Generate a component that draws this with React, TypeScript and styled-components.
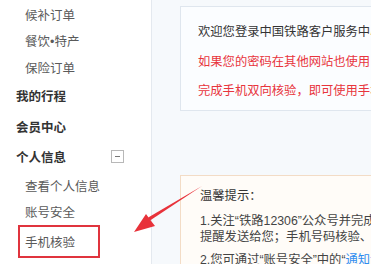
import React from 'react';
import styled, { createGlobalStyle } from 'styled-components';

const GlobalStyle = createGlobalStyle`
  html, body {
    margin: 0;
    padding: 0;
    overflow: hidden;
    background: #ffffff;
  }
  body {
    font-family: "Liberation Sans", "Noto Sans CJK SC", sans-serif;
  }
`;

type NavEntry = { label: string; kind: 'head' | 'sub'; toggle?: boolean; active?: boolean };

const navEntries: NavEntry[] = [
  { label: '候补订单', kind: 'sub' },
  { label: '餐饮•特产', kind: 'sub' },
  { label: '保险订单', kind: 'sub' },
  { label: '我的行程', kind: 'head' },
  { label: '会员中心', kind: 'head' },
  { label: '个人信息', kind: 'head', toggle: true },
  { label: '查看个人信息', kind: 'sub' },
  { label: '账号安全', kind: 'sub' },
  { label: '手机核验', kind: 'sub', active: true },
  { label: '常用信息管理', kind: 'head', toggle: true },
];

export default function App() {
  return (
    <>
      <GlobalStyle />
      <Page>
        <Sidebar>
          {navEntries.map((item) =>
            item.kind === 'head' ? (
              <HeadItem key={item.label}>
                <span>{item.label}</span>
                {item.toggle && <Toggle />}
              </HeadItem>
            ) : (
              <SubItem key={item.label} $active={item.active}>
                {item.label}
              </SubItem>
            )
          )}
        </Sidebar>

        <Main>
          <NoticeBox>
            <Line>欢迎您登录中国铁路客户服务中心网站。</Line>
            <Line $red>如果您的密码在其他网站也使用，建议您修改本网站密码。</Line>
            <Line $red>完成手机双向核验，即可使用手机号码直接登录。</Line>
          </NoticeBox>

          <TipBox>
            <TipTitle>温馨提示：</TipTitle>
            <TipLine>1.关注“铁路12306”公众号并完成微信绑定，即可将购票、退票等信息</TipLine>
            <TipLine>提醒发送给您；手机号码核验、通过后可使用手机号码登录。</TipLine>
            <TipLine $gap>
              2.您可通过“账号安全”中的“<Link>通知设置</Link>”修改提醒方式。
            </TipLine>
          </TipBox>
        </Main>

        <Arrow viewBox="0 0 371 264" width="371" height="264">
          <path d="M202 186 L150 220.5 L148.2 217.6 Z" fill="#e8323a" />
          <path d="M151.5 221.5 L146 214 L134 232 L155 226 Z" fill="#e8323a" />
        </Arrow>
      </Page>
    </>
  );
}

const Page = styled.div`
  position: relative;
  width: 371px;
  height: 264px;
  display: flex;
  overflow: hidden;
`;

const Sidebar = styled.nav`
  width: 151px;
  flex: none;
  border-right: 1px solid #e4e9ef;
  background: #ffffff;
  display: flex;
  flex-direction: column;
  padding-top: 1px;
`;

const HeadItem = styled.div`
  flex: none;
  height: 30.5px;
  display: flex;
  align-items: center;
  justify-content: space-between;
  padding: 0 27px 0 16px;
  font-size: 12.5px;
  font-weight: 700;
  color: #333333;
`;

const Toggle = styled.i`
  position: relative;
  width: 11px;
  height: 11px;
  border: 1px solid #b8b8b8;
  background: #ffffff;

  &::after {
    content: '';
    position: absolute;
    left: 3px;
    top: 5px;
    width: 5px;
    height: 1px;
    background: #777777;
  }
`;

const SubItem = styled.div<{ $active?: boolean }>`
  flex: none;
  height: 26.5px;
  display: flex;
  align-items: center;
  box-sizing: border-box;
  font-size: 12.5px;
  color: #5a5a5a;
  white-space: nowrap;
  ${(p) =>
    p.$active
      ? `
    margin: 0 51px 0 18px;
    padding-left: 5px;
    height: 33px;
    border: 2px solid #e0343e;
  `
      : `
    padding-left: 25px;
  `}
`;

const Main = styled.main`
  flex: 1;
  min-width: 0;
  background: #f6f9fc;
  padding: 6px 0 0 28px;
  display: flex;
  flex-direction: column;
`;

const NoticeBox = styled.section`
  flex: none;
  height: 105px;
  box-sizing: border-box;
  border: 1px solid #dfe6ee;
  border-right: none;
  background: #fbfdff;
  padding: 17px 0 0 17px;
  display: flex;
  flex-direction: column;
  gap: 13.5px;
`;

const Line = styled.div<{ $red?: boolean }>`
  font-size: 12.3px;
  line-height: 16px;
  white-space: nowrap;
  color: ${(p) => (p.$red ? '#e8353d' : '#333333')};
`;

const TipBox = styled.section`
  margin-top: 64px;
  flex: 1;
  border: 1px solid #f3dcc6;
  border-right: none;
  border-bottom: none;
  background: #fffcf8;
  padding: 12px 0 0 19px;
  display: flex;
  flex-direction: column;
`;

const TipTitle = styled.div`
  font-size: 12.3px;
  line-height: 16px;
  color: #333333;
  margin-bottom: 9px;
`;

const TipLine = styled.div<{ $gap?: boolean }>`
  font-size: 12.3px;
  line-height: 16px;
  color: #444444;
  white-space: nowrap;
  margin-top: ${(p) => (p.$gap ? '7px' : '0')};
`;

const Link = styled.span`
  color: #2f8df0;
`;

const Arrow = styled.svg`
  position: absolute;
  left: 0;
  top: 0;
  pointer-events: none;
`;
